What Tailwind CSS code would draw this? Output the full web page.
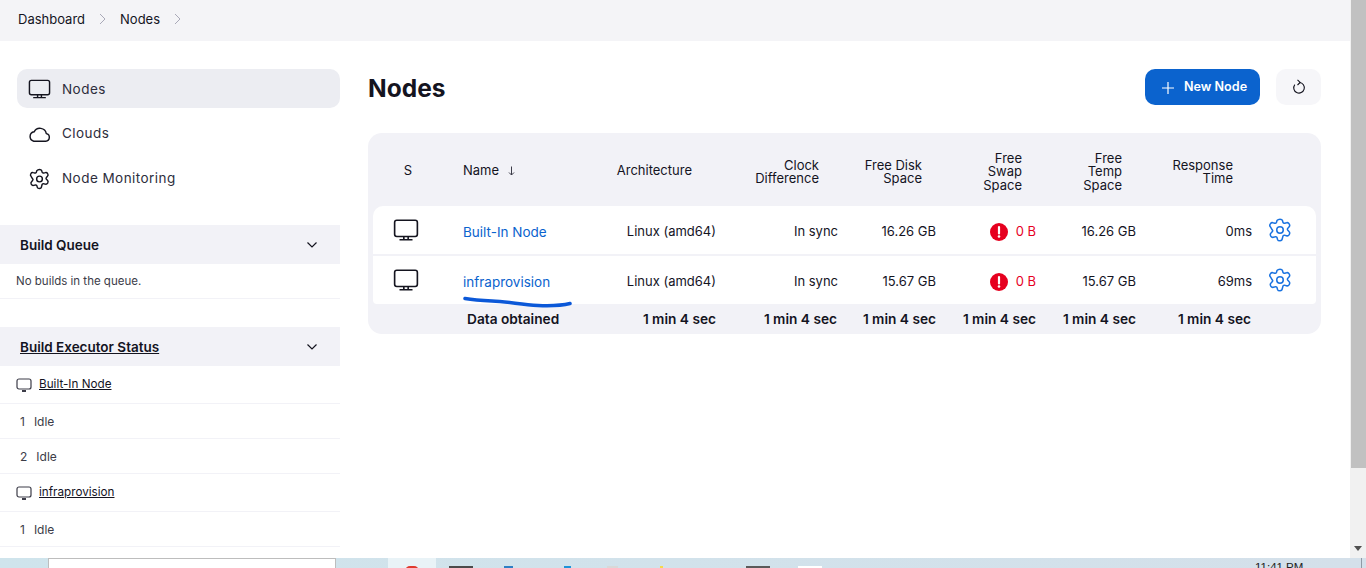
<!DOCTYPE html>
<html lang="en">
<head>
<meta charset="utf-8">
<title>Nodes</title>
<script src="https://cdn.jsdelivr.net/npm/@tailwindcss/browser@4"></script>
</head>
<body class="h-[568px] w-[1366px] overflow-hidden bg-white font-['Inter',sans-serif] text-[13.5px] text-[#14141f]">
<div class="flex h-[558px] w-[1366px]">
  <div class="w-[1350px] shrink-0 overflow-hidden">
    <nav class="flex h-[41px] items-start bg-[#f4f4f7] pl-[18px] pt-[11px] text-[13px] leading-4">
      <span>Dashboard</span>
      <svg class="ml-[14px] mt-[2px] h-3 w-[7px] text-[#a9a9b8]" viewBox="0 0 7 12" fill="none" stroke="currentColor" stroke-width="1"><path d="M1 1l5 5-5 5"/></svg>
      <span class="ml-[14px]">Nodes</span>
      <svg class="ml-[14px] mt-[2px] h-3 w-[7px] text-[#a9a9b8]" viewBox="0 0 7 12" fill="none" stroke="currentColor" stroke-width="1"><path d="M1 1l5 5-5 5"/></svg>
    </nav>
    <div class="flex">
      <aside class="w-[340px] shrink-0 pt-[28px]">
        <div class="ml-[17px] flex flex-col gap-[6px]">
          <a class="flex h-[39px] items-center gap-[11px] rounded-[10px] bg-[#ecedf2] pl-[11px] text-[#2e2e3d]">
            <svg class="h-[24px] w-[23px]" viewBox="0 0 24 24" fill="none" stroke="#14141f" stroke-width="1.500" stroke-linejoin="round" stroke-linecap="round"><rect x="1.500" y="3" width="21" height="15" rx="2"/><path d="M6 21h12M10 18.500v2M14 18.500v2"/></svg>
            <span class="pt-[2px] tracking-[0.45px]">Nodes</span>
          </a>
          <a class="flex h-[39px] items-center gap-[11px] pl-[11px] text-[#2e2e3d]">
            <svg class="h-[24px] w-[23px]" viewBox="0 0 24 24" fill="none" stroke="#14141f" stroke-width="1.500" stroke-linejoin="round"><path d="M6 19.500h12.500a4 4 0 0 0 .6-7.900A6.800 6.800 0 0 0 6.400 9.700 5 5 0 0 0 6 19.500Z"/></svg>
            <span class="tracking-[0.45px]">Clouds</span>
          </a>
          <a class="flex h-[39px] items-center gap-[11px] pl-[11px] text-[#2e2e3d]">
            <svg class="h-[24px] w-[23px]" viewBox="0 0 24 24" fill="none" stroke="#14141f" stroke-width="1.500" stroke-linejoin="round"><path d="M12 2c1 0 2 .3 2.300 1.300l.4 1.500c.2.700 1 1.100 1.700.9l1.600-.4c1-.3 2 .2 2.500 1l.1.200c.5.900.4 2-.3 2.700l-1.100 1.200c-.5.500-.5 1.300 0 1.800l1.100 1.200c.7.700.8 1.800.3 2.700l-.1.200c-.5.800-1.500 1.300-2.500 1l-1.600-.4c-.7-.2-1.500.2-1.700.9l-.4 1.500C14 21.700 13 22 12 22s-2-.3-2.300-1.300l-.4-1.500c-.2-.7-1-1.100-1.700-.9l-1.600.4c-1 .3-2-.2-2.500-1l-.1-.2c-.5-.9-.4-2 .3-2.700l1.100-1.200c.5-.5.500-1.300 0-1.800L3.200 9.200c-.7-.7-.8-1.800-.3-2.700l.1-.2c.5-.8 1.500-1.300 2.500-1l1.600.4c.7.200 1.500-.2 1.700-.9l.4-1.500C10 2.300 11 2 12 2Z"/><circle cx="12" cy="12" r="3"/></svg>
            <span class="tracking-[0.45px]">Node Monitoring</span>
          </a>
        </div>
        <section class="mt-[27px]">
          <div class="flex h-[39px] items-center justify-between bg-[#f2f2f7] pl-[20px] pr-[22px] font-semibold">
            <span class="pt-[2px]">Build Queue</span>
            <svg class="h-3 w-3" viewBox="0 0 12 12" fill="none" stroke="#14141f" stroke-width="1.200"><path d="M1.500 3.500 6 8l4.500-4.500"/></svg>
          </div>
          <div class="flex h-[35px] items-center border-b border-[#f2f2f7] pl-4 pt-[2px] text-[11.5px] text-[#3c3c48]">No builds in the queue.</div>
        </section>
        <section class="mt-[28px]">
          <div class="flex h-[39px] items-center justify-between bg-[#f2f2f7] pl-[20px] pr-[22px] font-semibold">
            <span class="pt-[2px] underline">Build Executor Status</span>
            <svg class="h-3 w-3" viewBox="0 0 12 12" fill="none" stroke="#14141f" stroke-width="1.200"><path d="M1.500 3.500 6 8l4.500-4.500"/></svg>
          </div>
          <div class="flex h-[38px] items-center gap-[7px] border-b border-[#f2f2f7] pl-4 text-[11.7px]">
            <svg class="h-4 w-4" viewBox="0 0 16 16" fill="none" stroke="#3c3c48" stroke-width="1.200"><rect x="1" y="2" width="14" height="10" rx="2"/><path d="M6 14h4" stroke-width="2"/></svg>
            <span class="underline">Built-In Node</span>
          </div>
          <div class="flex h-[35px] items-center gap-[9px] border-b border-[#f2f2f7] pl-[20px] pt-[2px] text-xs text-[#3c3c48]"><span>1</span><span>Idle</span></div>
          <div class="flex h-[35px] items-center gap-[9px] border-b border-[#f2f2f7] pl-[20px] pt-[2px] text-xs text-[#3c3c48]"><span>2</span><span>Idle</span></div>
          <div class="flex h-[38px] items-center gap-[7px] border-b border-[#f2f2f7] pl-4 text-[11.7px]">
            <svg class="h-4 w-4" viewBox="0 0 16 16" fill="none" stroke="#3c3c48" stroke-width="1.200"><rect x="1" y="2" width="14" height="10" rx="2"/><path d="M6 14h4" stroke-width="2"/></svg>
            <span class="underline">infraprovision</span>
          </div>
          <div class="flex h-[35px] items-center gap-[9px] border-b border-[#f2f2f7] pl-[20px] pt-[2px] text-xs text-[#3c3c48]"><span>1</span><span>Idle</span></div>
        </section>
      </aside>
      <main class="w-[981px] shrink-0 pl-[28px] pt-[28px]">
        <header class="flex h-[36px] items-center justify-between">
          <h1 class="pt-[2px] text-[24.5px] font-bold leading-none">Nodes</h1>
          <div class="flex gap-[16px]">
            <button class="flex h-[36px] w-[115px] items-center gap-[9px] rounded-[10px] bg-[#0b63ce] pl-[16px] pt-[1px] text-[12.6px] font-semibold text-white">
              <svg class="h-[14px] w-[14px]" viewBox="0 0 14 14" fill="none" stroke="currentColor" stroke-width="1.200"><path d="M7 1v12M1 7h12"/></svg>
              New Node
            </button>
            <button class="flex h-[36px] w-[45px] items-center justify-center rounded-[10px] bg-[#f6f6f9]">
              <svg class="h-[16px] w-[16px]" viewBox="0 0 16 16" fill="none" stroke="#14141f" stroke-width="1.100"><path d="M8.500 3.500A5.300 5.300 0 1 1 3.800 5.600"/><path d="M6.500 .8 9.200 3.400 6.500 6"/></svg>
            </button>
          </div>
        </header>
        <div class="relative mt-[28px] h-[201px] rounded-[14px] bg-[#f2f2f7]">
          <div class="grid h-[73px] grid-cols-[75px_152px_131px_122px_98px_100px_100px_116px_1fr] items-center px-[5px] text-[13px] leading-[13.500px]">
            <div class="pr-[5px] pt-[2px] text-center">S</div>
            <div class="flex items-center gap-[9px] pl-[15px] pt-[2px]">Name <svg class="h-[10px] w-[7px]" viewBox="0 0 7 10" fill="none" stroke="#3c3c48" stroke-width="1"><path d="M3.500 .5v8.500M1 6.500 3.500 9 6 6.500"/></svg></div>
            <div class="pr-[39px] pt-[2px] text-right">Architecture</div>
            <div class="pr-[34px] pt-[5px] text-right">Clock<br>Difference</div>
            <div class="pr-[29px] pt-[5px] text-right">Free Disk<br>Space</div>
            <div class="pr-[29px] pt-[5px] text-right">Free<br>Swap<br>Space</div>
            <div class="pr-[29px] pt-[5px] text-right">Free<br>Temp<br>Space</div>
            <div class="pr-[34px] pt-[5px] text-right">Response<br>Time</div>
          </div>
          <div class="mx-[5px] flex flex-col gap-[2px] text-[13px]">
            <div class="grid h-[48px] grid-cols-[75px_152px_131px_122px_98px_100px_100px_116px_1fr] items-center rounded-t-[10px] bg-white pt-[4px]">
              <div class="flex justify-center pb-[4px] pr-[10px]"><svg class="h-[26px] w-[26px]" viewBox="0 0 24 24" fill="none" stroke="#14141f" stroke-width="1.500" stroke-linejoin="round"><rect x="1.500" y="3" width="21" height="15" rx="2"/><path d="M6 21h12M10 18.500v2M14 18.500v2"/></svg></div>
              <a class="pl-[15px] text-[13.5px] text-[#0b63ce]">Built-In Node</a>
              <div class="pr-[15px] text-right">Linux (amd64)</div>
              <div class="pr-[15px] text-right">In sync</div>
              <div class="pr-[15px] text-right">16.26 GB</div>
              <div class="flex items-center justify-end gap-[8px] pr-[15px] text-[#e6001f]"><svg class="h-[18px] w-[18px]" viewBox="0 0 18 18"><circle cx="9" cy="9" r="9" fill="#e6001f"/><path d="M9 4v6.500" stroke="#fff" stroke-width="2.200" stroke-linecap="round"/><circle cx="9" cy="13.500" r="1.300" fill="#fff"/></svg>0 B</div>
              <div class="pr-[15px] text-right">16.26 GB</div>
              <div class="pr-[15px] text-right">0ms</div>
              <svg class="h-[26px] w-[26px] -translate-y-[2px] text-[#1a73e0]" viewBox="0 0 24 24" fill="none" stroke="currentColor" stroke-width="1.400" stroke-linejoin="round"><path d="M12 2c1 0 2 .3 2.300 1.300l.4 1.500c.2.700 1 1.100 1.700.9l1.600-.4c1-.3 2 .2 2.500 1l.1.200c.5.900.4 2-.3 2.700l-1.100 1.200c-.5.500-.5 1.300 0 1.800l1.100 1.200c.7.700.8 1.800.3 2.700l-.1.200c-.5.800-1.500 1.300-2.500 1l-1.600-.4c-.7-.2-1.500.2-1.700.9l-.4 1.500C14 21.700 13 22 12 22s-2-.3-2.300-1.300l-.4-1.500c-.2-.7-1-1.100-1.700-.9l-1.600.4c-1 .3-2-.2-2.500-1l-.1-.2c-.5-.9-.4-2 .3-2.700l1.100-1.200c.5-.5.500-1.300 0-1.800L3.200 9.200c-.7-.7-.8-1.800-.3-2.700l.1-.2c.5-.8 1.500-1.300 2.500-1l1.600.4c.7.200 1.500-.2 1.700-.9l.4-1.500C10 2.300 11 2 12 2Z"/><circle cx="12" cy="12" r="3"/></svg>
            </div>
            <div class="grid h-[48px] grid-cols-[75px_152px_131px_122px_98px_100px_100px_116px_1fr] items-center rounded-b-[4px] bg-white pt-[4px]">
              <div class="flex justify-center pb-[4px] pr-[10px]"><svg class="h-[26px] w-[26px]" viewBox="0 0 24 24" fill="none" stroke="#14141f" stroke-width="1.500" stroke-linejoin="round"><rect x="1.500" y="3" width="21" height="15" rx="2"/><path d="M6 21h12M10 18.500v2M14 18.500v2"/></svg></div>
              <a class="pl-[15px] text-[13.5px] text-[#0b63ce]">infraprovision</a>
              <div class="pr-[15px] text-right">Linux (amd64)</div>
              <div class="pr-[15px] text-right">In sync</div>
              <div class="pr-[15px] text-right">15.67 GB</div>
              <div class="flex items-center justify-end gap-[8px] pr-[15px] text-[#e6001f]"><svg class="h-[18px] w-[18px]" viewBox="0 0 18 18"><circle cx="9" cy="9" r="9" fill="#e6001f"/><path d="M9 4v6.500" stroke="#fff" stroke-width="2.200" stroke-linecap="round"/><circle cx="9" cy="13.500" r="1.300" fill="#fff"/></svg>0 B</div>
              <div class="pr-[15px] text-right">15.67 GB</div>
              <div class="pr-[15px] text-right">69ms</div>
              <svg class="h-[26px] w-[26px] -translate-y-[2px] text-[#1a73e0]" viewBox="0 0 24 24" fill="none" stroke="currentColor" stroke-width="1.400" stroke-linejoin="round"><path d="M12 2c1 0 2 .3 2.300 1.300l.4 1.500c.2.700 1 1.100 1.700.9l1.600-.4c1-.3 2 .2 2.500 1l.1.200c.5.900.4 2-.3 2.700l-1.100 1.200c-.5.500-.5 1.300 0 1.800l1.100 1.200c.7.700.8 1.800.3 2.700l-.1.200c-.5.800-1.500 1.300-2.500 1l-1.600-.4c-.7-.2-1.500.2-1.700.9l-.4 1.500C14 21.700 13 22 12 22s-2-.3-2.300-1.300l-.4-1.500c-.2-.7-1-1.100-1.700-.9l-1.600.4c-1 .3-2-.2-2.500-1l-.1-.2c-.5-.9-.4-2 .3-2.700l1.100-1.200c.5-.5.500-1.300 0-1.800L3.200 9.200c-.7-.7-.8-1.800-.3-2.700l.1-.2c.5-.8 1.500-1.300 2.500-1l1.600.4c.7.200 1.500-.2 1.700-.9l.4-1.500C10 2.300 11 2 12 2Z"/><circle cx="12" cy="12" r="3"/></svg>
            </div>
          </div>
          <div class="mx-[5px] grid h-[28px] grid-cols-[75px_152px_131px_122px_98px_100px_100px_116px_1fr] items-center whitespace-nowrap pt-[2px] text-[13.700px] font-semibold">
            <div class="col-start-2 pl-[19px]">Data obtained</div>
            <div class="pr-[15px] text-right">1 min 4 sec</div>
            <div class="pr-[16px] text-right">1 min 4 sec</div>
            <div class="pr-[15px] text-right">1 min 4 sec</div>
            <div class="pr-[15px] text-right">1 min 4 sec</div>
            <div class="pr-[15px] text-right">1 min 4 sec</div>
            <div class="pr-[16px] text-right">1 min 4 sec</div>
          </div>
          <svg class="absolute left-[94px] top-[162px] h-[16px] w-[112px]" viewBox="0 0 112 16" fill="none" stroke="#0b58d8" stroke-width="3.500" stroke-linecap="round"><path d="M3 3.500C12 5 20 5.500 30 6c16 .5 28 3.500 46 4.500 12 .5 22 .5 32-2"/></svg>
        </div>
      </main>
    </div>
  </div>
  <div class="relative w-[16px] shrink-0 bg-[#f1f1f1]">
    <div class="ml-[1px] h-[468px] bg-[#c1c1c1]"></div>
    <div class="absolute bottom-[7px] left-[4px] h-0 w-0 border-x-[4px] border-t-[5px] border-x-transparent border-t-[#505050]"></div>
  </div>
</div>
<footer class="flex h-[10px] items-start overflow-hidden bg-gradient-to-r from-[#cfe4ec] to-[#d4e0ea]">
  <div class="ml-[48px] h-[10px] w-[288px] shrink-0 border border-b-0 border-[#bdbdbd] bg-white"></div>
  <div class="ml-[52px] flex h-[10px] w-[48px] shrink-0 justify-center bg-[#e9f3f7] pt-[8px]"><div class="h-[10px] w-[14px] rounded-full bg-[#e03a2e]"></div></div>
  <div class="ml-[13px] mt-[8px] h-[2px] w-[24px] shrink-0 bg-[#4b4b4b]"></div>
  <div class="ml-[31px] mt-[8px] h-[2px] w-[9px] shrink-0 bg-[#2e7fc4]"></div>
  <div class="ml-[51px] mt-[8px] h-[2px] w-[7px] shrink-0 bg-[#1f93d8]"></div>
  <div class="ml-[36px] mt-[8px] h-[2px] w-[11px] shrink-0 bg-[#d8d8d8]"></div>
  <div class="ml-[42px] mt-[8px] h-[2px] w-[3px] shrink-0 bg-[#f5d94a]"></div>
  <div class="ml-[83px] mt-[8px] h-[2px] w-[24px] shrink-0 bg-[#5a5a5a]"></div>
  <div class="ml-[28px] mt-[8px] h-[2px] w-[24px] shrink-0 bg-white"></div>
  <div class="ml-[433px] mt-[4px] shrink-0 whitespace-nowrap font-['Liberation_Sans',sans-serif] text-[11.500px] leading-none text-[#222]">11:41 PM</div>
  <div class="ml-[58px] h-[10px] w-[1px] shrink-0 bg-[#8f9aa5]"></div>
</footer>
</body>
</html>
